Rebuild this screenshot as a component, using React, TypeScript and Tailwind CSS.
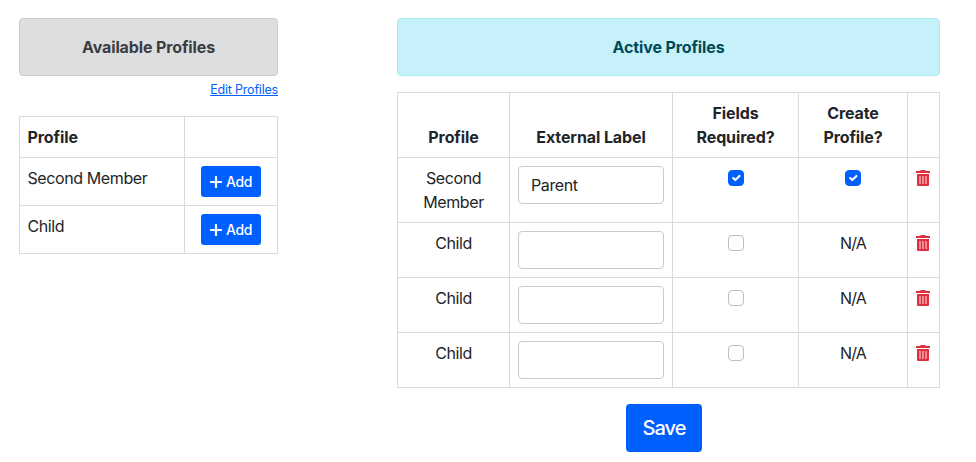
import React from 'react';

const cell = 'border-r border-b border-[#d8dce0] p-2 align-top';
const leftCell = 'border-r border-b border-[#d8dce0] py-2 pr-2 pl-[7.5px] align-top';

function PlusIcon() {
  return (
    <svg width="12" height="12" viewBox="0 0 12 12" className="shrink-0">
      <path d="M6 1v10M1 6h10" stroke="#fff" strokeWidth="2.2" strokeLinecap="round" />
    </svg>
  );
}

function TrashIcon() {
  return (
    <svg width="14" height="16" viewBox="0 0 14 16" className="mt-1 block">
      <path d="M0 1h4l1-1h4l1 1h4v2H0z" fill="#df2f3f" />
      <path d="M1 4h12v11a1 1 0 0 1-1 1H2a1 1 0 0 1-1-1z" fill="#df2f3f" />
      <path d="M4 6v8M7 6v8M10 6v8" stroke="#f0959d" strokeWidth="1.8" />
    </svg>
  );
}

function CheckBox({ checked }: { checked: boolean }) {
  return (
    <span
      role="checkbox"
      aria-checked={checked}
      className={`mx-auto mt-1 flex size-4 items-center justify-center rounded border ${
        checked ? 'border-[#0060fd] bg-[#0060fd]' : 'border-[#bfbfbf] bg-white'
      }`}
    >
      {checked && (
        <svg width="14" height="14" viewBox="0 0 20 20" className="shrink-0">
          <path d="M6 10l3 3 6-6" fill="none" stroke="#fff" strokeWidth="3" strokeLinecap="round" strokeLinejoin="round" />
        </svg>
      )}
    </span>
  );
}

const rows = [
  { name: 'Second Member', label: 'Parent', required: true, create: true },
  { name: 'Child', label: '', required: false, create: null },
  { name: 'Child', label: '', required: false, create: null },
  { name: 'Child', label: '', required: false, create: null },
];

export default function App() {
  return (
    <main className="flex h-[462px] items-start bg-white pt-[18px] pl-[19px] font-['Inter',sans-serif] text-[16px] leading-6 tracking-[-0.4px] text-[#212529]">
      <section className="w-[259px]">
        <div className="flex h-[58px] items-center justify-center rounded border border-[#cbccce] bg-[#dddee0] font-bold tracking-[-0.12px] text-[#3a3d42]">
          Available Profiles
        </div>
        <div className="mt-1 flex h-5 items-center justify-end">
          <a href="#" className="text-[12.5px] leading-5 tracking-[-0.19px] whitespace-nowrap text-[#0060fd] underline">Edit Profiles</a>
        </div>
        <table className="mt-4 w-[259px] table-fixed border-separate border-spacing-0 border-t border-l border-[#d8dce0]">
          <colgroup>
            <col className="w-[165px]" />
            <col className="w-[93px]" />
          </colgroup>
          <thead>
            <tr>
              <th className={`${leftCell} text-left font-bold tracking-[-0.1px]`}>Profile</th>
              <th className={cell}></th>
            </tr>
          </thead>
          <tbody>
            {['Second Member', 'Child'].map((name) => (
              <tr key={name}>
                <td className={leftCell}>{name}</td>
                <td className={cell}>
                  <button className="mx-auto flex h-[31px] w-[60px] items-center justify-center gap-1 rounded-[3px] bg-[#0060fd] text-[14px] leading-5 font-medium tracking-[-0.3px] text-white">
                    <PlusIcon />
                    Add
                  </button>
                </td>
              </tr>
            ))}
          </tbody>
        </table>
      </section>

      <section className="ml-[119px] w-[543px]">
        <div className="flex h-[58px] items-center justify-center rounded border border-[#a9edf5] bg-[#c6f1fb] font-bold tracking-[-0.12px] text-[#004a57]">
          Active Profiles
        </div>
        <table className="mt-4 w-[543px] table-fixed border-separate border-spacing-0 border-t border-l border-[#d8dce0] text-center">
          <colgroup>
            <col className="w-[112px]" />
            <col className="w-[163px]" />
            <col className="w-[126px]" />
            <col className="w-[109px]" />
            <col className="w-[32px]" />
          </colgroup>
          <thead>
            <tr>
              {['Profile', 'External Label', 'Fields Required?', 'Create Profile?', ''].map((title) => (
                <th key={title} className="border-r border-b border-[#d8dce0] p-2 align-bottom font-bold tracking-[-0.1px]">
                  {title}
                </th>
              ))}
            </tr>
          </thead>
          <tbody>
            {rows.map((row, i) => (
              <tr key={i}>
                <td className={cell}>{row.name}</td>
                <td className={cell}>
                  <input
                    defaultValue={row.label}
                    className="block h-[38px] w-full rounded border border-[#c6ccd3] bg-white px-3 py-1.5 tracking-[-0.4px] text-[#212529]"
                  />
                </td>
                <td className={cell}><CheckBox checked={row.required} /></td>
                <td className={`${cell} tracking-[-0.8px]`}>{row.create === null ? 'N/A' : <CheckBox checked={row.create} />}</td>
                <td className={cell}><TrashIcon /></td>
              </tr>
            ))}
          </tbody>
        </table>
        <button className="mt-4 ml-[229px] block h-12 w-[76px] rounded bg-[#0060fd] text-[20px] leading-[30px] font-medium tracking-[-0.9px] text-white">
          Save
        </button>
      </section>
    </main>
  );
}
